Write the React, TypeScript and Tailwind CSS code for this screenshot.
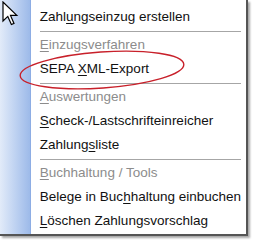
import React from "react";

type Row =
  | { kind: "item"; pre: string; key: string; post: string; muted?: boolean }
  | { kind: "sep" };

const rows: Row[] = [
  { kind: "item", pre: "Zahl", key: "u", post: "ngseinzug erstellen" },
  { kind: "sep" },
  { kind: "item", pre: "", key: "E", post: "inzugsverfahren", muted: true },
  { kind: "item", pre: "SEPA ", key: "X", post: "ML-Export" },
  { kind: "sep" },
  { kind: "item", pre: "", key: "A", post: "uswertungen", muted: true },
  { kind: "item", pre: "", key: "S", post: "check-/Lastschrifteinreicher" },
  { kind: "item", pre: "Zahlung", key: "s", post: "liste" },
  { kind: "sep" },
  { kind: "item", pre: "", key: "B", post: "uchhaltung / Tools", muted: true },
  { kind: "item", pre: "Belege in Buc", key: "h", post: "haltung einbuchen" },
  { kind: "item", pre: "", key: "L", post: "öschen Zahlungsvorschlag" },
];

const Cursor = () => (
  <svg className="absolute left-[2px] top-[1px]" width="17" height="26" viewBox="0 0 17 26">
    <path
      d="M1 1 L1 20 L5.8 15.4 L9.4 23.5 L12 22.4 L8.5 14.4 L14.8 14.4 Z"
      fill="#ffffff"
      stroke="#000000"
      strokeWidth="1.2"
    />
  </svg>
);

export default function App() {
  return (
    <div className="relative w-[257px] h-[244px] bg-white overflow-hidden" style={{ fontFamily: '"Liberation Sans", Arial, sans-serif' }}>
      <div className="flex w-[248px] h-[236px] bg-white border-r-2 border-b-2 border-[#555555] shadow-[2px_2px_2px_rgba(0,0,0,0.35)]">
        <div className="w-[32px] h-full bg-gradient-to-r from-[#e2ebf9] to-[#9dbae9] border-r border-[#8dade4]" />
        <div className="flex-1 flex flex-col pt-[5px] pl-[9px] pr-[5px]">
          {rows.map((r, i) =>
            r.kind === "sep" ? (
              <div key={i} className="h-[4px] flex flex-col justify-center">
                <div className="h-px bg-[#a6a6a6]" />
              </div>
            ) : (
              <div
                key={i}
                className={`h-[24px] flex items-center text-[13.5px] ${
                  r.muted ? "text-[#8c8c8c]" : "text-[#111111]"
                }`}
              >
                <span className="whitespace-pre">
                  {r.pre}
                  <span className="underline underline-offset-[2px]">{r.key}</span>
                  {r.post}
                </span>
              </div>
            )
          )}
        </div>
      </div>
      <svg className="absolute left-0 top-0" width="257" height="244" viewBox="0 0 257 244">
        <ellipse
          cx="102"
          cy="70"
          rx="82"
          ry="18"
          fill="none"
          stroke="#c8202a"
          strokeWidth="1.4"
          transform="rotate(-4 102 70)"
        />
      </svg>
      <Cursor />
    </div>
  );
}
